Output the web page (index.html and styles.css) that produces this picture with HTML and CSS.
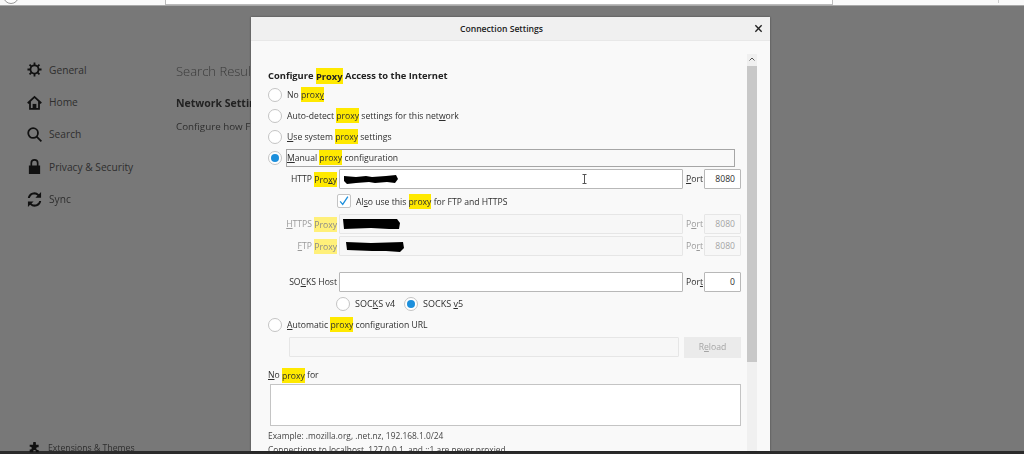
FILE: index.html
```html
<!DOCTYPE html>
<html lang="en">
<head>
  <meta charset="UTF-8" />
  <title>Connection Settings</title>
  <link rel="stylesheet" href="styles.css">
</head>
<body>

<div class="page">
  <div class="topbar">
    <div class="back-button"></div>
    <div class="url-bar"></div>
    <div class="toolbar-sep"></div>
  </div>

  <div class="main">
    <nav class="sidebar">
      <a class="nav-item">
        <svg class="line-icon" viewBox="0 0 16 16"><circle cx="8" cy="8" r="4.300"/><path d="M8 .5v3M8 12.500v3M.5 8h3M12.500 8h3M2.700 2.700l2.200 2.200M11.100 11.100l2.200 2.200M13.300 2.700l-2.200 2.200M4.900 11.100l-2.200 2.200"/></svg>
        <span>General</span>
      </a>
      <a class="nav-item">
        <svg class="line-icon" viewBox="0 0 16 16"><path d="M.8 8.800L8 2l7.200 6.800M3.200 7.200v7.600h9.600V7.200"/><rect class="solid" x="6" y="9.500" width="4" height="5.500"/></svg>
        <span>Home</span>
      </a>
      <a class="nav-item">
        <svg class="line-icon" viewBox="0 0 16 16"><circle cx="6.500" cy="6.500" r="5.200"/><path d="M10.300 10.300l5 5"/></svg>
        <span>Search</span>
      </a>
      <a class="nav-item">
        <svg viewBox="0 0 16 16"><path fill-rule="evenodd" d="M8 0a4.300 4.300 0 0 1 4.300 4.300V7H14v9H2V7h1.700V4.300A4.300 4.300 0 0 1 8 0zm0 1.800a2.500 2.500 0 0 0-2.500 2.500V7h5V4.300A2.500 2.500 0 0 0 8 1.800z"/></svg>
        <span>Privacy &amp; Security</span>
      </a>
      <a class="nav-item">
        <svg viewBox="0 0 16 16"><path d="M15 0v6H9l2.200-2.200A5 5 0 0 0 3 6.500H.9A7 7 0 0 1 12.700 2.300zM1 16v-6h6l-2.200 2.200A5 5 0 0 0 13 9.500h2.100A7 7 0 0 1 3.300 13.700z"/></svg>
        <span>Sync</span>
      </a>
      <a class="nav-item nav-bottom">
        <svg viewBox="0 0 16 16"><path d="M6 1.500a2 2 0 0 1 4 0V4h4v3.500h-1.500a2 2 0 0 0 0 4H14V15H10v-1.500a2 2 0 0 0-4 0V15H1v-4h1a2 2 0 0 0 0-4H1V4h5z"/></svg>
        <span>Extensions &amp; Themes</span>
      </a>
    </nav>

    <section class="content">
      <h1>Search Results</h1>
      <h2>Network Settings</h2>
      <p>Configure how Firefox connects to the internet.</p>
    </section>

    <div class="dialog">
      <div class="dialog-header">
        <span>Connection Settings</span>
        <svg class="close-icon" viewBox="0 0 10 10"><path d="M1.500 1.500l7 7M8.500 1.500l-7 7"/></svg>
      </div>

      <div class="dialog-body">
        <div class="dialog-content">
          <h3>Configure <mark>Proxy</mark> Access to the Internet</h3>

          <div class="radio-row"><i class="radio"></i><span>No <mark>prox<u>y</u></mark></span></div>
          <div class="radio-row"><i class="radio"></i><span>Auto-detect <mark>proxy</mark> settings for this net<u>w</u>ork</span></div>
          <div class="radio-row"><i class="radio"></i><span><u>U</u>se system <mark>proxy</mark> settings</span></div>
          <div class="radio-row"><i class="radio checked"></i><span class="focus-box"><u>M</u>anual <mark>proxy</mark> configuration</span></div>

          <div class="proxy-row">
            <label>HTTP <mark>Pro<u>x</u>y</mark></label>
            <div class="field">
              <svg class="scribble" width="60" height="13" viewBox="0 0 60 13"><path d="M2 3l12 1 10-1 6 1 14-1 10-1 2 4-3 4-8-1-12 1-6-1-13 1-9 1-3-3z"/></svg>
              <svg class="ibeam" width="5" height="10" viewBox="0 0 5 10"><path d="M.5.500h4M.5 9.500h4M2.500.500v9"/></svg>
            </div>
            <label class="port-label"><u>P</u>ort</label>
            <div class="field port">8080</div>
          </div>

          <div class="check-row">
            <i class="checkbox"><svg viewBox="0 0 14 14"><path d="M2.500 7.500l3 3.500 6-9"/></svg></i>
            <span>Al<u>s</u>o use this <mark>proxy</mark> for FTP and HTTPS</span>
          </div>

          <div class="proxy-row disabled">
            <label><u>H</u>TTPS <mark>Proxy</mark></label>
            <div class="field">
              <svg class="scribble" width="60" height="13" viewBox="0 0 60 13"><path d="M1 1l54 0 3 4-1 6-10 0-18-1-27 1z"/></svg>
            </div>
            <label class="port-label">P<u>o</u>rt</label>
            <div class="field port">8080</div>
          </div>

          <div class="proxy-row disabled ftp-row">
            <label><u>F</u>TP <mark>Proxy</mark></label>
            <div class="field">
              <svg class="scribble indent" width="60" height="13" viewBox="0 0 60 13"><path d="M1 2l25 1 32-1 1 6-4 4-14-1-14 0-25-1z"/></svg>
            </div>
            <label class="port-label">Po<u>r</u>t</label>
            <div class="field port">8080</div>
          </div>

          <div class="proxy-row socks-row">
            <label>SO<u>C</u>KS Host</label>
            <div class="field"></div>
            <label class="port-label">Por<u>t</u></label>
            <div class="field port">0</div>
          </div>

          <div class="socks-options">
            <div class="radio-row"><i class="radio"></i><span>SOC<u>K</u>S v4</span></div>
            <div class="radio-row"><i class="radio checked"></i><span>SOCKS <u>v</u>5</span></div>
          </div>

          <div class="radio-row"><i class="radio"></i><span><u>A</u>utomatic <mark>proxy</mark> configuration URL</span></div>

          <div class="auto-url">
            <div class="field"></div>
            <div class="reload-button">R<u>e</u>load</div>
          </div>

          <div class="no-proxy-label"><u>N</u>o <mark>proxy</mark> for</div>
          <div class="no-proxy-box"></div>
          <div class="hint">Example: .mozilla.org, .net.nz, 192.168.1.0/24</div>
          <div class="hint">Connections to localhost, 127.0.0.1, and ::1 are never proxied.</div>
        </div>

        <div class="scrollbar">
          <div class="scroll-arrow"><svg viewBox="0 0 10 11"><path d="M2.500 6.500L5 4l2.500 2.500"/></svg></div>
          <div class="scroll-thumb"></div>
        </div>
      </div>
    </div>
  </div>

  <div class="bottombar"></div>
</div>

</body>
</html>
```

FILE: styles.css
```css
body {
  margin: 0;
  font-family: "Open Sans", Arial, sans-serif;
  background-color: #787878;
  color: #2e2e2e;
}

.page {
  width: 1024px;
  height: 454px;
  display: flex;
  flex-direction: column;
  overflow: hidden;
  filter: blur(0.35px);
}

/* browser chrome left at the top */
.topbar {
  height: 5px;
  flex-shrink: 0;
  background-color: #f9f9f9;
  border-bottom: 1px solid #a8a8a8;
  position: relative;
  overflow: hidden;
}

.back-button {
  position: absolute;
  left: 3px;
  top: -12px;
  width: 14px;
  height: 14px;
  border: 1px solid #999;
  border-radius: 50%;
  background-color: #fff;
}

.url-bar {
  position: absolute;
  left: 165px;
  top: -10px;
  width: 666px;
  height: 13px;
  background-color: #fff;
  border: 1px solid #bbb;
}

.toolbar-sep {
  position: absolute;
  left: 998px;
  top: 0;
  width: 1px;
  height: 3px;
  background-color: #ccc;
}

.main {
  flex: 1;
  min-height: 0;
  display: flex;
  position: relative;
  background-color: #787878;
}

.bottombar {
  height: 3px;
  flex-shrink: 0;
  background-color: #2b2b2b;
}

/* sidebar */
.sidebar {
  width: 149px;
  padding: 47.7px 0 0 27px;
  display: flex;
  flex-direction: column;
  font-size: 10.2px;
}

.nav-item {
  height: 32.3px;
  display: flex;
  align-items: center;
  gap: 7px;
  color: #2e2e2e;
  flex-shrink: 0;
}

.nav-item svg {
  width: 15px;
  height: 15px;
  fill: #111;
  flex-shrink: 0;
}

.nav-item .line-icon {
  fill: none;
  stroke: #111;
  stroke-width: 1.900;
}

.nav-item .solid {
  fill: #111;
  stroke: none;
}

.nav-bottom {
  margin-top: auto;
  margin-bottom: -13px;
  font-size: 8.7px;
}

.nav-bottom svg {
  width: 11px;
  height: 11px;
  margin-left: 2px;
  margin-right: 1px;
}

/* page behind the dialog */
.content {
  padding-top: 55px;
  white-space: nowrap;
}

.content h1 {
  margin: 0;
  font-size: 13px;
  font-weight: 300;
  line-height: 20px;
  color: #3a3a3a;
}

.content h2 {
  margin: 14px 0 0;
  font-size: 10.5px;
  font-weight: 700;
  line-height: 16px;
  color: #222;
}

.content p {
  margin: 8px 0 0;
  font-size: 9.8px;
  line-height: 16px;
}

/* dialog */
.dialog {
  position: absolute;
  left: 251px;
  top: 11px;
  bottom: 0;
  width: 519px;
  background-color: #f9f9f9;
  display: flex;
  flex-direction: column;
  overflow: hidden;
  font-size: 8.65px;
  box-shadow: 0 0 2px rgba(0, 0, 0, 0.4);
}

.dialog-header {
  height: 23px;
  padding-right: 18px;
  flex-shrink: 0;
  background-color: #f0f0f0;
  border-bottom: 1px solid #e8e8e8;
  display: flex;
  align-items: center;
  justify-content: center;
  font-size: 8.65px;
  font-weight: 600;
  color: #222;
  position: relative;
}

.close-icon {
  position: absolute;
  right: 7px;
  top: 7px;
  width: 9px;
  height: 9px;
  fill: none;
  stroke: #222;
  stroke-width: 1.500;
}

.dialog-body {
  flex: 1;
  min-height: 0;
  display: flex;
  padding-top: 13px;
}

.dialog-content {
  width: 473px;
  margin-left: 17px;
  padding-top: 13px;
  flex-shrink: 0;
  overflow: hidden;
}

.dialog-content h3 {
  margin: 0;
  font-size: 9.35px;
  font-weight: 700;
  line-height: 17px;
  color: #222;
}

mark {
  background-color: #ffe900;
  color: inherit;
  padding: 1.500px 0;
}

.disabled {
  color: #9a9a9a;
}

.disabled mark {
  background-color: #fff07a;
  color: #8a8a8a;
}

/* radios and checkbox */
.radio-row {
  height: 21px;
  display: flex;
  align-items: center;
  gap: 5px;
  white-space: nowrap;
}

.radio {
  width: 12px;
  height: 12px;
  border: 1px solid #c4c4c4;
  border-radius: 50%;
  background-color: #fff;
  flex-shrink: 0;
  display: flex;
  align-items: center;
  justify-content: center;
}

.radio.checked::after {
  content: "";
  width: 8px;
  height: 8px;
  border-radius: 50%;
  background-color: #1c8fdc;
}

.focus-box {
  width: 447px;
  height: 16px;
  line-height: 16px;
  border: 1px solid #a6a6a6;
  margin-left: -1px;
}

.check-row {
  height: 24px;
  display: flex;
  align-items: center;
  gap: 5px;
  padding-left: 69px;
}

.check-row span {
  padding-top: 1px;
}

.checkbox {
  width: 12px;
  height: 12px;
  border: 1px solid #c4c4c4;
  border-radius: 2px;
  background-color: #fff;
}

.checkbox svg {
  display: block;
  width: 12px;
  height: 12px;
  fill: none;
  stroke: #1c8fdc;
  stroke-width: 1.500;
}

/* proxy rows */
.proxy-row {
  display: grid;
  grid-template-columns: 71px 344px 21px 37px;
  align-items: center;
  height: 20px;
  margin-top: 1px;
  white-space: nowrap;
}

.proxy-row label {
  text-align: right;
  padding-right: 2px;
}

.proxy-row .port-label {
  text-align: left;
  padding: 0 0 0 3px;
}

.ftp-row {
  margin-top: 2px;
}

.proxy-row.socks-row {
  margin-top: 16px;
}

.field {
  height: 18px;
  border: 1px solid #b8b8b8;
  border-radius: 1px;
  background-color: #fff;
  display: flex;
  align-items: center;
  position: relative;
}

.disabled .field {
  background-color: #f7f7f7;
  border-color: #e6e6e6;
  color: #a5a5a5;
}

.port {
  justify-content: flex-end;
  padding-right: 5px;
  width: 30px;
}

.scribble {
  margin-left: 2px;
  fill: #000;
}

.scribble.indent {
  margin-left: 5px;
}

.ibeam {
  position: absolute;
  left: 242px;
  top: 4px;
  fill: none;
  stroke: #555;
  stroke-width: 1;
}

.socks-options {
  display: flex;
  gap: 9px;
  margin-top: 1px;
  padding-left: 68px;
  font-size: 9px;
}

.auto-url {
  display: flex;
  gap: 5px;
  padding: 2px 0 0 21px;
}

.auto-url .field {
  width: 388px;
  background-color: #f7f7f7;
  border-color: #e6e6e6;
}

.reload-button {
  width: 57px;
  height: 21px;
  line-height: 21px;
  text-align: center;
  background-color: #ebebeb;
  color: #a5a5a5;
}

.no-proxy-label {
  margin-top: 9px;
  line-height: 16px;
}

.no-proxy-box {
  width: 469px;
  height: 40px;
  margin: 1px 0 3px 2px;
  background-color: #fff;
  border: 1px solid #c4c4c4;
}

.hint {
  line-height: 14px;
  height: 14px;
  font-size: 8.4px;
  color: #444;
  white-space: nowrap;
}

/* scrollbar */
.scrollbar {
  width: 10px;
  margin-left: 6px;
  background-color: #f0f0f0;
  flex-shrink: 0;
}

.scroll-arrow {
  height: 12px;
}

.scroll-arrow svg {
  display: block;
  width: 10px;
  height: 11px;
  fill: none;
  stroke: #555;
  stroke-width: 1;
}

.scroll-thumb {
  height: 296px;
  background-color: #c8c8c8;
}
```
